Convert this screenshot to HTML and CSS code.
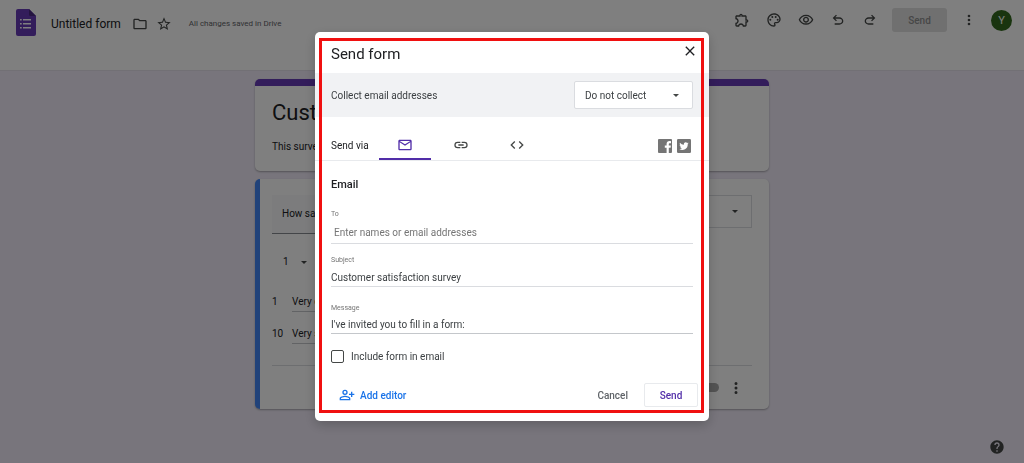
FILE: index.html
```html
<!DOCTYPE html>
<html lang="en">
<head>
    <meta charset="UTF-8">
    <meta name="viewport" content="width=device-width, initial-scale=1.0">
    <title>Untitled form</title>
    <link rel="stylesheet" href="styles.css">
</head>
<body>
    <header class="topbar">
        <svg class="form-logo" viewBox="0 0 20 27" width="20" height="27">
            <path d="M2 0h11l7 7v18a2 2 0 0 1-2 2H2a2 2 0 0 1-2-2V2a2 2 0 0 1 2-2z" fill="#673ab7"/>
            <path d="M13 0l7 7h-5.500a1.500 1.500 0 0 1-1.500-1.500z" fill="#482980"/>
            <path d="M7 10h8v1.500H7zM7 14h8v1.500H7zM7 18h8v1.500H7zM4 10h1.700v1.500H4zM4 14h1.700v1.500H4zM4 18h1.700v1.500H4z" fill="#fff"/>
        </svg>
        <span class="form-name">Untitled form</span>
        <button class="icon-button" aria-label="Move to folder">
            <svg viewBox="0 0 24 24" width="16" height="16"><path d="M9.170 6l2 2H20v10H4V6h5.170M10 4H4c-1.100 0-2 .9-2 2v12c0 1.100.9 2 2 2h16c1.100 0 2-.9 2-2V8c0-1.100-.9-2-2-2h-8l-2-2z"/></svg>
        </button>
        <button class="icon-button star" aria-label="Star">
            <svg viewBox="0 0 24 24" width="16" height="16"><path d="M22 9.240l-7.190-.62L12 2 9.190 8.630 2 9.240l5.460 4.730L5.820 21 12 17.270 18.180 21l-1.630-7.030L22 9.240zM12 15.400l-3.760 2.270 1-4.280-3.320-2.880 4.380-.38L12 6.100l1.710 4.040 4.380.38-3.320 2.880 1 4.280L12 15.400z"/></svg>
        </button>
        <span class="save-status">All changes saved in Drive</span>

        <div class="toolbar">
            <div class="tools">
                <button class="icon-button" aria-label="Add-ons">
                    <svg viewBox="0 0 24 24" width="16" height="16"><path d="M10.500 4.500c.28 0 .5.220.5.500v2h6v6h2c.28 0 .5.220.5.500s-.22.500-.5.500h-2v6h-2.120c-.68-1.750-2.390-3-4.380-3s-3.700 1.250-4.380 3H4v-2.120c1.750-.68 3-2.390 3-4.380 0-1.990-1.240-3.700-2.990-4.380L4 7h6V5c0-.28.220-.5.500-.5m0-2C9.120 2.500 8 3.620 8 5H4c-1.100 0-1.990.9-1.990 2v3.800h.29c1.490 0 2.700 1.210 2.700 2.700s-1.210 2.700-2.700 2.700H2V20c0 1.100.9 2 2 2h3.800v-.3c0-1.490 1.210-2.700 2.700-2.700s2.700 1.210 2.700 2.700v.3H17c1.100 0 2-.9 2-2v-4c1.380 0 2.500-1.120 2.500-2.500S20.380 11 19 11V7c0-1.100-.9-2-2-2h-4c0-1.380-1.120-2.500-2.500-2.500z"/></svg>
                </button>
                <button class="icon-button" aria-label="Customise theme">
                    <svg viewBox="0 0 24 24" width="16" height="16"><path d="M12 22C6.490 22 2 17.510 2 12S6.490 2 12 2s10 4.040 10 9c0 3.310-2.690 6-6 6h-1.770c-.28 0-.5.220-.5.500 0 .12.050.23.130.33.410.47.640 1.060.64 1.670A2.500 2.500 0 0 1 12 22zm0-18c-4.410 0-8 3.590-8 8s3.590 8 8 8c.28 0 .5-.22.500-.5a.54.54 0 0 0-.14-.35c-.41-.46-.63-1.050-.63-1.650a2.500 2.500 0 0 1 2.500-2.500H16c2.210 0 4-1.790 4-4 0-3.860-3.590-7-8-7z"/><circle cx="6.500" cy="11.500" r="1.500"/><circle cx="9.500" cy="7.500" r="1.500"/><circle cx="14.500" cy="7.500" r="1.500"/><circle cx="17.500" cy="11.500" r="1.500"/></svg>
                </button>
                <button class="icon-button" aria-label="Preview">
                    <svg viewBox="0 0 24 24" width="16" height="16"><path d="M12 6c3.790 0 7.170 2.130 8.820 5.500C19.170 14.870 15.790 17 12 17s-7.170-2.130-8.820-5.500C4.830 8.130 8.210 6 12 6m0-2C7 4 2.730 7.110 1 11.500 2.730 15.890 7 19 12 19s9.270-3.110 11-7.500C21.270 7.110 17 4 12 4zm0 5a2.500 2.500 0 0 1 0 5 2.500 2.500 0 0 1 0-5m0-2c-2.480 0-4.500 2.020-4.500 4.500S9.520 16 12 16s4.500-2.020 4.500-4.500S14.480 7 12 7z"/></svg>
                </button>
                <button class="icon-button" aria-label="Undo">
                    <svg viewBox="0 0 24 24" width="16" height="16"><path d="M7 19v-2h7.100c1.050 0 1.960-.33 2.740-1s1.160-1.500 1.160-2.500-.39-1.830-1.160-2.500-1.690-1-2.740-1H7.800l2.600 2.600L9 14 4 9l5-5 1.400 1.400L7.800 8h6.300c1.620 0 3 .52 4.160 1.570S20 11.930 20 13.500s-.58 2.880-1.740 3.930S15.720 19 14.100 19H7z"/></svg>
                </button>
                <button class="icon-button" aria-label="Redo">
                    <svg viewBox="0 0 24 24" width="16" height="16"><path d="M9.900 19c-1.620 0-3-.52-4.160-1.570S4 15.070 4 13.500s.58-2.880 1.740-3.930S8.280 8 9.900 8h6.300l-2.600-2.600L15 4l5 5-5 5-1.400-1.400 2.600-2.600H9.900c-1.050 0-1.960.33-2.740 1S6 12.500 6 13.500s.39 1.830 1.160 2.500 1.690 1 2.740 1H17v2H9.900z"/></svg>
                </button>
            </div>
            <button class="publish">Send</button>
            <button class="icon-button" aria-label="More">
                <svg viewBox="0 0 24 24" width="16" height="16"><path d="M12 8a2 2 0 1 0 0-4 2 2 0 0 0 0 4zm0 2a2 2 0 1 0 0 4 2 2 0 0 0 0-4zm0 6a2 2 0 1 0 0 4 2 2 0 0 0 0-4z"/></svg>
            </button>
            <span class="avatar">Y</span>
        </div>
    </header>

    <main class="form-editor">
        <section class="card title-card">
            <h1>Customer survey</h1>
            <p>This survey</p>
        </section>

        <section class="card question-card">
            <div class="question-row">
                <div class="question-text">How sat</div>
                <div class="question-type"><span class="caret"></span></div>
            </div>
            <div class="scale-row"><span>1</span><span class="caret"></span></div>
            <div class="scale-label"><span>1</span><span class="label-text">Very dis</span></div>
            <div class="scale-label"><span>10</span><span class="label-text">Very sat</span></div>
            <div class="question-footer">
                <span class="toggle"></span>
                <svg viewBox="0 0 24 24" width="18" height="18"><path d="M12 8a2 2 0 1 0 0-4 2 2 0 0 0 0 4zm0 2a2 2 0 1 0 0 4 2 2 0 0 0 0-4zm0 6a2 2 0 1 0 0 4 2 2 0 0 0 0-4z"/></svg>
            </div>
        </section>
    </main>

    <button class="help" aria-label="Help">
        <svg viewBox="0 0 24 24" width="16" height="16"><path d="M12 2C6.480 2 2 6.480 2 12s4.480 10 10 10 10-4.480 10-10S17.520 2 12 2zm1 17h-2v-2h2v2zm2.070-7.750l-.9.920C13.450 12.900 13 13.500 13 15h-2v-.5c0-1.100.45-2.100 1.170-2.830l1.240-1.260c.37-.36.590-.86.590-1.410a2 2 0 1 0-4 0H8a4 4 0 1 1 8 0c0 .88-.36 1.680-.93 2.250z"/></svg>
    </button>

    <!-- Send dialog -->
    <div class="scrim">
        <form class="dialog" role="dialog" aria-label="Send form">
            <div class="dialog-header">
                <h2>Send form</h2>
                <button type="button" class="icon-button close" aria-label="Close">
                    <svg viewBox="0 0 24 24" width="16" height="16"><path d="M19 6.410L17.590 5 12 10.590 6.410 5 5 6.410 10.590 12 5 17.590 6.410 19 12 13.410 17.590 19 19 17.590 13.410 12z"/></svg>
                </button>
            </div>

            <div class="collect">
                <label for="collect">Collect email addresses</label>
                <div class="select-box">
                    <select id="collect">
                        <option>Do not collect</option>
                        <option>Verified</option>
                        <option>Responder input</option>
                    </select>
                    <span class="caret"></span>
                </div>
            </div>

            <div class="send-via">
                <span class="send-via-label">Send via</span>
                <button type="button" class="tab active" aria-label="Email">
                    <svg viewBox="0 0 24 24" width="16" height="16"><path d="M20 4H4c-1.100 0-2 .9-2 2v12c0 1.100.9 2 2 2h16c1.100 0 2-.9 2-2V6c0-1.100-.9-2-2-2zm0 14H4V8l8 5 8-5v10zm-8-7L4 6h16l-8 5z"/></svg>
                </button>
                <button type="button" class="tab" aria-label="Link">
                    <svg viewBox="0 0 24 24" width="16" height="16"><path d="M3.900 12A3.100 3.100 0 0 1 7 8.900h4V7H7a5 5 0 0 0 0 10h4v-1.900H7A3.100 3.100 0 0 1 3.900 12zM8 13h8v-2H8v2zm9-6h-4v1.900h4a3.100 3.100 0 0 1 0 6.200h-4V17h4a5 5 0 0 0 0-10z"/></svg>
                </button>
                <button type="button" class="tab" aria-label="Embed HTML">
                    <svg viewBox="0 0 24 24" width="16" height="16"><path d="M9.400 16.600L4.800 12l4.600-4.600L8 6l-6 6 6 6 1.400-1.400zm5.200 0l4.600-4.600-4.600-4.600L16 6l6 6-6 6-1.400-1.400z"/></svg>
                </button>
                <div class="share">
                    <button type="button" class="icon-button" aria-label="Share on Facebook">
                        <svg viewBox="0 0 14 14" width="14" height="14"><path d="M1 0h12a1 1 0 0 1 1 1v12a1 1 0 0 1-1 1h-2.200V8.700h1.800l.3-2.100h-2.100V5.300c0-.6.300-1 1.100-1h1.100V2.300C12.700 2.200 12.100 2.100 11.500 2.100c-1.800 0-2.900 1-2.900 2.900v1.600H6.800v2.100h1.800V14H1a1 1 0 0 1-1-1V1a1 1 0 0 1 1-1z" fill="#757575"/></svg>
                    </button>
                    <button type="button" class="icon-button" aria-label="Share on Twitter">
                        <svg viewBox="0 0 24 24" width="14" height="14"><rect width="24" height="24" rx="2" fill="#757575"/><path d="M20 7.300c-.6.300-1.200.4-1.900.5.700-.4 1.200-1 1.400-1.800-.6.400-1.300.6-2.100.8a3.300 3.300 0 0 0-5.600 3C9.100 9.700 6.700 8.400 5.100 6.400c-.9 1.500-.4 3.400 1 4.400-.5 0-1-.2-1.500-.4 0 1.600 1.100 2.900 2.600 3.200-.5.100-1 .2-1.500.1.400 1.300 1.600 2.200 3.100 2.300A6.600 6.600 0 0 1 4 17.300a9.300 9.300 0 0 0 14.400-8.300c.6-.5 1.200-1.100 1.600-1.700z" fill="#fff"/></svg>
                    </button>
                </div>
            </div>

            <div class="fields">
                <h3>Email</h3>
                <div class="field field-to">
                    <label for="to">To</label>
                    <input id="to" type="text" placeholder="Enter names or email addresses">
                </div>
                <div class="field">
                    <label for="subject">Subject</label>
                    <input id="subject" type="text" value="Customer satisfaction survey">
                </div>
                <div class="field field-message">
                    <label for="message">Message</label>
                    <input id="message" type="text" value="I've invited you to fill in a form:">
                </div>
                <div class="include">
                    <input id="include" type="checkbox">
                    <label for="include">Include form in email</label>
                </div>
            </div>

            <div class="actions">
                <button type="button" class="add-editor">
                    <svg viewBox="0 0 24 24" width="16" height="16"><path d="M9 12a4 4 0 1 0 0-8 4 4 0 0 0 0 8zm0-6a2 2 0 1 1 0 4 2 2 0 0 1 0-4zm0 7c-2.670 0-8 1.340-8 4v3h16v-3c0-2.660-5.330-4-8-4zm6 5H3v-1c.2-.7 3.300-2 6-2s5.800 1.300 6 2v1zM20 10V7h-2v3h-3v2h3v3h2v-3h3v-2z"/></svg>
                    Add editor
                </button>
                <button type="button" class="cancel">Cancel</button>
                <button type="submit" class="submit">Send</button>
            </div>
            <div class="highlight"></div>
        </form>
    </div>
</body>
</html>
```

FILE: styles.css
```css
/* General */
* {
    box-sizing: border-box;
}

body {
    margin: 0;
    min-height: 100vh;
    background-color: #f0ebf8;
    font-family: Roboto, "Liberation Sans", sans-serif;
    font-size: 10px;
    color: #202124;
}

h1, h2, h3, p {
    margin: 0;
    font-weight: 400;
}

button {
    border: none;
    padding: 0;
    background: none;
    font-family: inherit;
    cursor: pointer;
}

svg {
    display: block;
    fill: #444746;
}

.icon-button {
    display: flex;
}

.caret {
    border-left: 3px solid transparent;
    border-right: 3px solid transparent;
    border-top: 3px solid #444746;
}

/* Top bar */
.topbar {
    display: flex;
    align-items: flex-start;
    height: 71px;
    padding: 0 12px 0 16px;
    background-color: #fff;
    border-bottom: 1px solid #e4e0ea;
}

.form-logo {
    margin: 9px 15px 0 0;
}

.form-name {
    margin: 14px 11px 0 0;
    font-size: 12px;
    line-height: 20px;
}

.topbar > .icon-button {
    margin: 16px 8px 0 0;
}

.save-status {
    margin: 16px 0 0 9px;
    font-size: 8px;
    line-height: 16px;
    color: #5f6368;
}

.toolbar {
    display: flex;
    align-items: center;
    gap: 14px;
    margin: 8px 0 0 auto;
}

.tools {
    display: flex;
    gap: 16px;
}

.publish {
    width: 55px;
    height: 24px;
    border-radius: 3px;
    background-color: #e0e0e0;
    color: #8f8f8f;
    font-size: 10px;
    font-weight: 500;
}

.avatar {
    width: 21px;
    height: 21px;
    border-radius: 50%;
    background-color: #33691e;
    color: #fff;
    font-size: 11px;
    line-height: 21px;
    text-align: center;
}

/* Form editor */
.form-editor {
    display: flex;
    flex-direction: column;
    gap: 8px;
    max-width: 514px;
    margin: 8px auto 0;
}

.card {
    background-color: #fff;
    border-radius: 5px;
    box-shadow: 0 1px 2px rgba(0, 0, 0, 0.3);
}

.title-card {
    padding: 11px 17px 16px;
    border-top: 7px solid #673ab7;
}

.title-card h1 {
    font-size: 22px;
    line-height: 32px;
}

.title-card p {
    margin-top: 10px;
    line-height: 16px;
}

.question-card {
    padding: 16px 17px 0 12px;
    border-left: 5px solid #4285f4;
}

.question-row {
    display: flex;
    justify-content: space-between;
}

.question-text {
    width: 280px;
    padding: 0 10px;
    background-color: #f8f9fa;
    border-bottom: 1px solid #868b90;
    line-height: 38px;
}

.question-type {
    display: flex;
    align-items: center;
    justify-content: flex-end;
    width: 140px;
    height: 33px;
    padding-right: 13px;
    border: 1px solid #dadce0;
}

.scale-row {
    display: flex;
    align-items: center;
    gap: 12px;
    margin-bottom: 18px;
    padding: 16px 11px 0;
    line-height: 24px;
}

.scale-label {
    display: flex;
    height: 32px;
    line-height: 20px;
}

.scale-label span:first-child {
    width: 20px;
}

.label-text {
    width: 130px;
    height: 20px;
    border-bottom: 1px solid #c4c7cb;
}

.question-footer {
    display: flex;
    align-items: center;
    justify-content: flex-end;
    gap: 8px;
    height: 44px;
    margin-top: 9px;
    padding-right: 7px;
    border-top: 1px solid #dadce0;
}

.toggle {
    width: 20px;
    height: 9px;
    border-radius: 5px;
    background-color: #a8a8a8;
}

.help {
    position: fixed;
    right: 19px;
    bottom: 8px;
}

/* Send dialog */
.scrim {
    position: fixed;
    inset: 0;
    display: flex;
    align-items: flex-start;
    justify-content: center;
    padding-top: 32px;
    background-color: rgba(0, 0, 0, 0.5);
}

.dialog {
    position: relative;
    width: 394px;
    background-color: #fff;
    border-radius: 5px;
    box-shadow: 0 4px 12px rgba(0, 0, 0, 0.2);
}

.dialog-header {
    display: flex;
    justify-content: space-between;
    padding: 11px 11px 8px 16px;
}

.dialog-header h2 {
    font-size: 15px;
    line-height: 22px;
}

.close svg {
    fill: #202124;
}

.collect {
    display: flex;
    align-items: center;
    justify-content: space-between;
    padding: 8px 16px;
    background-color: #f1f2f4;
    color: #3c4043;
}

.select-box {
    display: flex;
    align-items: center;
    position: relative;
    width: 119px;
    height: 28px;
    background-color: #fff;
    border: 1px solid #dadce0;
    border-radius: 2px;
}

.select-box select {
    width: 100%;
    height: 100%;
    padding: 0 10px;
    border: none;
    background: none;
    appearance: none;
    font: inherit;
    color: inherit;
}

.select-box .caret {
    position: absolute;
    right: 13px;
}

.send-via {
    display: flex;
    height: 44px;
    padding: 0 18px 0 16px;
    border-bottom: 1px solid #e8eaed;
}

.send-via-label {
    width: 48px;
    padding-top: 21px;
    line-height: 16px;
}

.tab {
    display: flex;
    justify-content: center;
    width: 52px;
    margin-right: 4px;
    padding-top: 20px;
}

.tab.active {
    border-bottom: 2px solid #512da8;
}

.tab.active svg {
    fill: #512da8;
}

.share {
    display: flex;
    gap: 5px;
    margin: 22px 0 0 auto;
}

.fields {
    padding: 16px 16px 0;
}

.fields h3 {
    margin-bottom: 16px;
    font-size: 11px;
    font-weight: 500;
    line-height: 16px;
}

.field {
    margin-bottom: 12px;
}

.field label {
    display: block;
    font-size: 7px;
    line-height: 10px;
    color: #757575;
}

.field input {
    width: 100%;
    height: 22px;
    padding: 4px 0 0;
    border: none;
    border-bottom: 1px solid #dadce0;
    outline: none;
    font: inherit;
    color: #3c4043;
}

.field-to {
    margin-bottom: 11px;
}

.field-to input {
    height: 25px;
    padding: 2px 3px 0;
}

.field input::placeholder {
    color: #757575;
}

.field-message {
    margin: 16px 0 14px;
}

.field-message input {
    height: 21px;
    padding-top: 2px;
    border-color: #c4c7cb;
}

.include {
    display: flex;
    align-items: center;
    gap: 7px;
    height: 16px;
    color: #3c4043;
}

.include input {
    width: 13px;
    height: 13px;
    margin: 0;
    border: 1px solid #444746;
    border-radius: 2px;
    appearance: none;
}

.actions {
    display: flex;
    align-items: center;
    padding: 19px 11px 14px 24px;
}

.actions button {
    font-size: 10px;
    font-weight: 500;
}

.actions .add-editor {
    display: flex;
    align-items: center;
    gap: 5px;
    margin-right: auto;
    color: #1a73e8;
}

.add-editor svg {
    fill: #1a73e8;
}

.actions .cancel {
    margin-right: 16px;
    color: #5f6368;
}

.actions .submit {
    width: 54px;
    height: 24px;
    border: 1px solid #e8eaed;
    border-radius: 2px;
    color: #512da8;
}

.highlight {
    position: absolute;
    inset: 6px 5px 8px 4px;
    border: 3px solid #f01010;
    pointer-events: none;
}
```
